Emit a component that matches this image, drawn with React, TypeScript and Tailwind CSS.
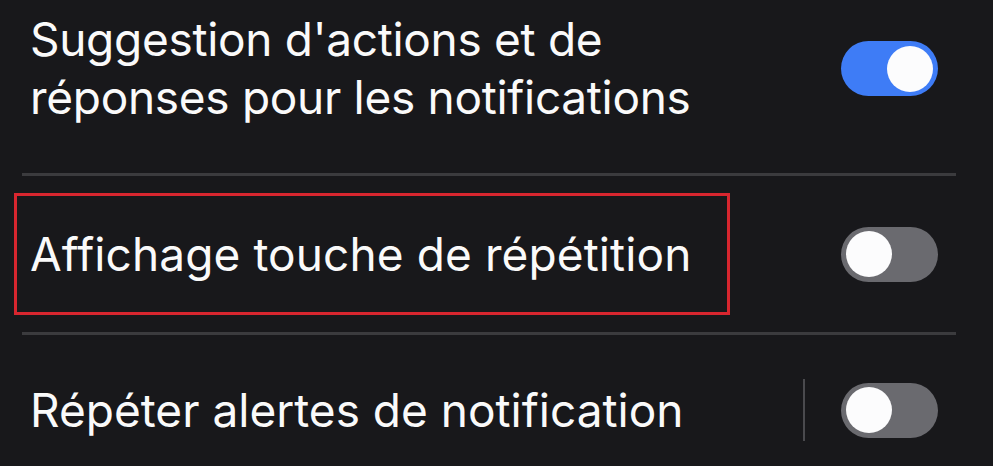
import React from "react";

function Toggle({ on }: { on: boolean }) {
  return (
    <div
      className={`flex h-[55px] w-[97px] shrink-0 items-center rounded-full px-[5px] ${
        on ? "justify-end bg-[#3e7cf6]" : "justify-start bg-[#6a6a6f]"
      }`}
    >
      <div className="h-[46px] w-[46px] rounded-full bg-[#fcfcfd]" />
    </div>
  );
}

export default function App() {
  return (
    <div
      className="h-[466px] w-[993px] overflow-hidden bg-[#18181b] text-[#fafafa]"
      style={{ fontFamily: "Inter, 'Noto Sans', sans-serif" }}
    >
      {/* Row 1 */}
      <div className="flex h-[173px] items-start justify-between pl-[30px] pr-[55px] pt-[10px]">
        <p className="text-[46px] leading-[58px] tracking-[-0.3px]">
          Suggestion d'actions et de
          <br />
          réponses pour les notifications
        </p>
        <div className="mt-[31px]">
          <Toggle on />
        </div>
      </div>
      <div className="mx-[22px] h-[3px] w-[934px] bg-[#3b3b3e]" />

      {/* Row 2 */}
      <div className="flex h-[156px] items-center justify-between pl-[14px] pr-[55px]">
        <div className="flex h-[122px] w-[716px] items-center border-[3px] border-[#d8262f] pl-[13px]">
          <p className="text-[46px] leading-[58px] tracking-[0.1px]">Affichage touche de répétition</p>
        </div>
        <Toggle on={false} />
      </div>
      <div className="mx-[22px] h-[3px] w-[934px] bg-[#3b3b3e]" />

      {/* Row 3 */}
      <div className="flex h-[150px] items-center pl-[30px] pr-[55px]">
        <p className="flex-1 text-[46px] leading-[58px] tracking-[0px]">Répéter alertes de notification</p>
        <div className="mr-[36px] h-[62px] w-[2px] bg-[#4a4a4e]" />
        <Toggle on={false} />
      </div>
    </div>
  );
}
